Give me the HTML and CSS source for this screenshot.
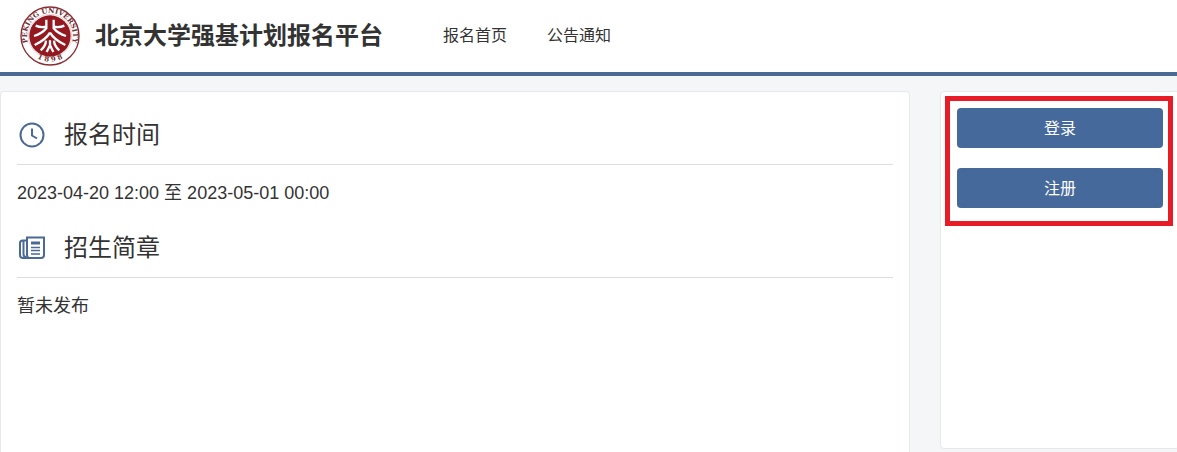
FILE: index.html
```html
<!DOCTYPE html>
<html lang="zh-CN">
<head>
    <meta charset="UTF-8">
    <meta name="viewport" content="width=device-width, initial-scale=1.0">
    <title>北京大学强基计划报名平台</title>
    <link rel="stylesheet" href="styles.css">
</head>
<body>
    <header class="header">
        <svg class="logo" viewBox="0 0 180 180" aria-hidden="true">
            <defs>
                <path id="ringTop" d="M37 134 A69 69 0 1 1 143 134"/>
                <path id="ringBottom" d="M22 128 A79 79 0 0 0 158 128"/>
            </defs>
            <circle cx="90" cy="90" r="87" fill="#fff" stroke="#8c2a30" stroke-width="4"/>
            <circle cx="90" cy="90" r="62" fill="#941820"/>
            <circle cx="90" cy="90" r="65" fill="none" stroke="#b9777b" stroke-width="1"/>
            <text class="logo-text"><textPath href="#ringTop" startOffset="50%">PEKING UNIVERSITY</textPath></text>
            <text class="logo-text"><textPath href="#ringBottom" startOffset="50%">1 8 9 8</textPath></text>
            <g fill="none" stroke="#fff" stroke-width="7">
                <path d="M79 41 V67 Q66 83 42 90"/>
                <path d="M101 41 V67 Q114 83 138 90"/>
                <path d="M47 59 Q62 66 79 62"/>
                <path d="M133 59 Q118 66 101 62"/>
                <path d="M90 80 Q77 102 44 117"/>
                <path d="M90 80 Q103 102 136 117"/>
                <path d="M78 104 Q77 121 62 133"/>
                <path d="M102 104 Q103 121 118 133"/>
                <path d="M90 103 V118 L80 138"/>
                <path d="M90 118 L100 138"/>
            </g>
        </svg>
        <h1>北京大学强基计划报名平台</h1>
        <nav class="nav">
            <a href="#">报名首页</a>
            <a href="#">公告通知</a>
        </nav>
    </header>

    <div class="container">
        <main class="panel content">
            <section>
                <h2>
                    <svg class="icon" viewBox="0 0 30 30" aria-hidden="true">
                        <circle cx="15" cy="15" r="11.5"/>
                        <path d="M15 8.500 V15.500 L20 18.500"/>
                    </svg>
                    报名时间
                </h2>
                <p>2023-04-20 12:00 至 2023-05-01 00:00</p>
            </section>
            <section>
                <h2>
                    <svg class="icon" viewBox="0 0 30 30" aria-hidden="true">
                        <path d="M10 4.500 H27 V22 Q27 25 24 25 H12.500 Q10 25 10 22 Z"/>
                        <path d="M10 7.500 H5.500 Q3 7.500 3 10 V22 Q3 25 6 25 H12.500 M6.500 8 V21 Q6.500 24 9 24"/>
                        <path d="M14 10 H23" stroke-width="3"/>
                        <path d="M14 14.500 H23 M14 17.500 H23 M14 21 H23" stroke-width="1.500"/>
                    </svg>
                    招生简章
                </h2>
                <p>暂未发布</p>
            </section>
        </main>

        <aside class="panel sidebar">
            <div class="actions">
                <button type="button">登录</button>
                <button type="button">注册</button>
            </div>
        </aside>
    </div>
</body>
</html>
```
FILE: styles.css
```css
* {
    margin: 0;
    padding: 0;
    box-sizing: border-box;
}

body {
    display: flex;
    flex-direction: column;
    min-height: 100vh;
    font-family: "Liberation Sans", "Noto Sans CJK SC", sans-serif;
    color: #333;
    background: #f5f6f8;
    overflow-x: hidden;
}

.header {
    display: flex;
    align-items: center;
    height: 76px;
    padding-left: 20px;
    background: #fff;
    border-bottom: 4px solid #4b6a93;
}

.logo {
    width: 60px;
    height: 60px;
    margin-right: 15px;
}

.logo-text {
    font-family: "DejaVu Serif", serif;
    font-size: 21px;
    font-weight: bold;
    fill: #702f35;
    text-anchor: middle;
}

h1 {
    font-size: 24px;
    line-height: 36px;
}

.nav {
    display: flex;
    gap: 40px;
    margin-left: 60px;
}

.nav a {
    font-size: 16px;
    line-height: 24px;
    color: #333;
    text-decoration: none;
}

/* the sidebar runs slightly past the right edge */
.container {
    flex: 1;
    display: grid;
    grid-template-columns: 1fr 240px;
    gap: 30px;
    margin: 15px -3px 0 0;
}

.panel {
    background: #fff;
    border: 1px solid #e6e8eb;
    border-radius: 4px;
}

.content {
    padding: 14px 16px;
    border-bottom: none;
    border-radius: 4px 4px 0 0;
}

h2 {
    display: flex;
    align-items: center;
    gap: 17px;
    height: 59px;
    font-size: 24px;
    line-height: 36px;
    font-weight: 400;
    border-bottom: 1px solid #ddd;
}

.icon {
    width: 30px;
    height: 30px;
    fill: none;
    stroke: #4a6994;
    stroke-width: 2;
}

.content p {
    padding: 15px 0 12px;
    font-size: 18px;
    line-height: 27px;
}

.sidebar {
    align-self: start;
    min-height: 358px;
    padding: 4px;
}

.actions {
    display: grid;
    gap: 20px;
    width: 228px;
    padding: 7px 5px 13px 7px;
    border: 5px solid #e81c26;
}

.actions button {
    height: 40px;
    padding-bottom: 2px;
    font-family: inherit;
    font-size: 16px;
    color: #fff;
    background: #46699c;
    border: none;
    border-radius: 4px;
    cursor: pointer;
}
```
